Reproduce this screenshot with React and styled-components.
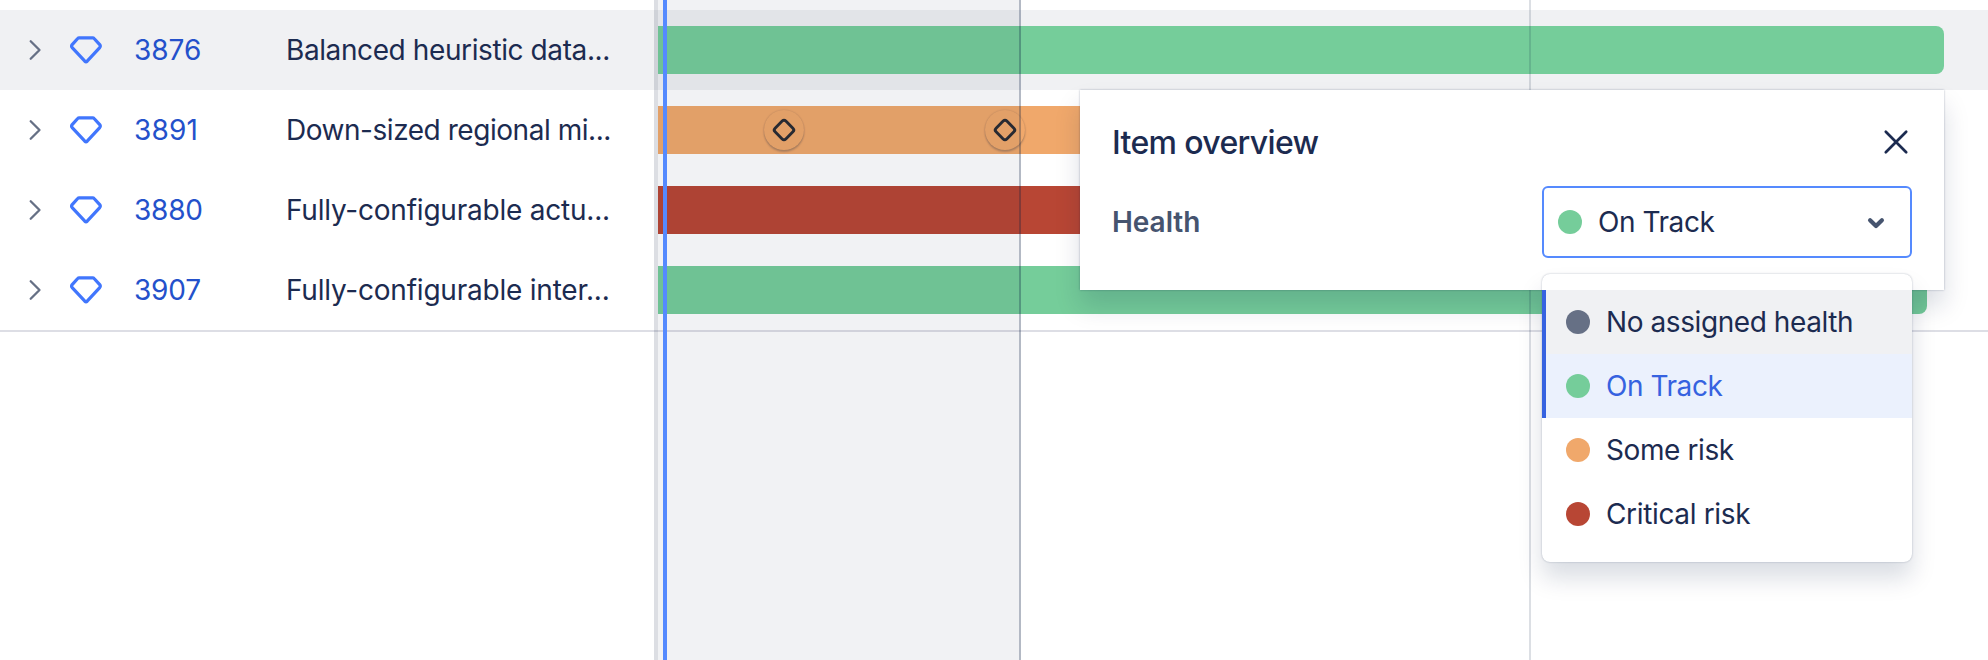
import React, { useState } from "react";
import styled, { createGlobalStyle } from "styled-components";

const GlobalStyle = createGlobalStyle`
  * {
    box-sizing: border-box;
  }
  body {
    margin: 0;
    background: #ffffff;
    color: #1c2b50;
    font-family: Inter, "Liberation Sans", sans-serif;
    font-size: 28px;
    line-height: 40px;
    -webkit-font-smoothing: antialiased;
  }
`;

const HEALTH = {
  none: { label: "No assigned health", color: "#667085", spacing: -0.42 },
  onTrack: { label: "On Track", color: "#75cd9a", spacing: -0.45 },
  someRisk: { label: "Some risk", color: "#f0a86b", spacing: -0.4 },
  criticalRisk: { label: "Critical risk", color: "#b84634", spacing: -0.35 },
};

const items = [
  { id: "3876", title: "Balanced heuristic data...", health: "onTrack", width: 1286, spacing: -0.4, idSpacing: 0 },
  { id: "3891", title: "Down-sized regional mi...", health: "someRisk", width: 1200, milestones: [106, 327], spacing: -0.46, idSpacing: 0.2 },
  { id: "3880", title: "Fully-configurable actu...", health: "criticalRisk", width: 1200, spacing: -0.22, idSpacing: -0.2 },
  { id: "3907", title: "Fully-configurable inter...", health: "onTrack", width: 1269, spacing: -0.22, idSpacing: -0.2 },
];

const Board = styled.main`
  position: relative;
  width: 1988px;
  height: 660px;
  padding-top: 10px;
  overflow: hidden;
`;
const Rows = styled.div`
  border-bottom: 2px solid #dddee5;
`;
const Row = styled.div`
  display: grid;
  grid-template-columns: 658px 1fr;
  height: 80px;
  background: ${({ $active }) => ($active ? "#f0f1f3" : "transparent")};
`;
const Cells = styled.div`
  display: grid;
  grid-template-columns: 70px 64px 152px 340px;
  align-items: center;
`;
const Expander = styled.button`
  display: flex;
  align-items: center;
  justify-content: center;
  height: 40px;
  padding: 0;
  border: 0;
  background: none;
`;
const ItemId = styled.a`
  color: #2451cb;
  letter-spacing: ${({ $spacing }) => $spacing}px;
`;
const Title = styled.span`
  white-space: nowrap;
  letter-spacing: ${({ $spacing }) => $spacing}px;
`;
const Lane = styled.div`
  display: flex;
  align-items: center;
`;
const Bar = styled.div`
  position: relative;
  height: 48px;
  border-radius: 0 8px 8px 0;
`;
const Milestone = styled.span`
  position: absolute;
  top: 4px;
  display: flex;
  align-items: center;
  justify-content: center;
  width: 40px;
  height: 40px;
  border-radius: 50%;
  box-shadow: 0 2px 2px rgba(9, 30, 66, 0.22), 0 0 2px rgba(9, 30, 66, 0.2);
`;

/* Timeline layers, drawn over the rows */
const Layer = styled.div`
  position: absolute;
  top: 0;
  bottom: 0;
  left: ${({ $left }) => $left}px;
  width: ${({ $width }) => $width}px;
  background: ${({ $color }) => $color};
  pointer-events: none;
`;

const Panel = styled.section`
  position: absolute;
  top: 90px;
  left: 1080px;
  width: 864px;
  height: 200px;
  padding: 32px;
  background: #ffffff;
  box-shadow: 0 16px 24px rgba(9, 30, 66, 0.15), 0 0 2px rgba(9, 30, 66, 0.31);
`;
const PanelHeader = styled.header`
  display: flex;
  align-items: center;
  justify-content: space-between;
  height: 40px;
`;
const PanelTitle = styled.h2`
  margin: 2px 0 0;
  font-size: 32px;
  font-weight: 500;
  letter-spacing: -0.65px;
`;
const CloseButton = styled.button`
  display: flex;
  padding: 0;
  border: 0;
  background: none;
`;
const Field = styled.div`
  display: flex;
  align-items: center;
  justify-content: space-between;
  margin-top: 24px;
`;
const FieldLabel = styled.span`
  color: #46546f;
  font-weight: 600;
  letter-spacing: -0.05px;
`;
const SelectWrap = styled.div`
  position: relative;
  width: 370px;
`;
const Select = styled.button`
  display: flex;
  align-items: center;
  width: 100%;
  height: 72px;
  padding: 0 18px 0 14px;
  border: 2px solid #558afe;
  border-radius: 6px;
  background: #ffffff;
  color: inherit;
  font: inherit;
  text-align: left;
`;
const Dot = styled.span`
  flex: none;
  width: 24px;
  height: 24px;
  margin-right: 16px;
  border-radius: 50%;
  background: ${({ $color }) => $color};
`;
const Label = styled.span`
  flex: 1;
  white-space: nowrap;
  letter-spacing: ${({ $spacing }) => $spacing}px;
`;
const Menu = styled.ul`
  position: absolute;
  top: 88px;
  left: 0;
  width: 370px;
  margin: 0;
  padding: 16px 0;
  list-style: none;
  border-radius: 8px;
  background: #ffffff;
  box-shadow: 0 16px 24px rgba(9, 30, 66, 0.15), 0 0 2px rgba(9, 30, 66, 0.31);
`;
const Option = styled.li`
  display: flex;
  align-items: center;
  height: 64px;
  padding-left: 20px;
  border-left: 4px solid ${({ $marked }) => ($marked ? "#3662e0" : "transparent")};
  background: ${({ $selected, $hovered }) =>
    $selected ? "#ebf1fd" : $hovered ? "#f0f1f3" : "transparent"};
  color: ${({ $selected }) => ($selected ? "#3662e0" : "inherit")};
`;

const ChevronRight = () => (
  <svg width="20" height="24" viewBox="0 0 20 24" fill="none">
    <path d="M5.7 3.2l8.8 8.8-8.8 8.8" stroke="#667085" strokeWidth="2.3" strokeLinecap="round" strokeLinejoin="round" />
  </svg>
);
const GemIcon = () => (
  <svg width="32" height="32" viewBox="0 0 32 32" fill="none">
    <path
      d="M9.1 3.8h13.6q.8 0 1.4.7l5.6 6.1q1.2 1.5 0 3L17.2 27.2q-1.2 1.1-2.4 0L2.2 13.6q-1.2-1.5 0-3l5.5-6.1q.6-.7 1.4-.7z"
      stroke="#4176fd"
      strokeWidth="3.2"
    />
  </svg>
);
const DiamondIcon = () => (
  <svg width="28" height="28" viewBox="0 0 28 28" fill="none">
    <rect x="6.4" y="6.4" width="15.2" height="15.2" rx="2.6" transform="rotate(45 14 14)" stroke="#292b31" strokeWidth="2.9" />
  </svg>
);
const CloseIcon = () => (
  <svg width="32" height="32" viewBox="0 0 32 32" fill="none">
    <path d="M5.8 5.8l20.4 20.4M26.2 5.8L5.8 26.2" stroke="#1c2b50" strokeWidth="2.7" strokeLinecap="round" />
  </svg>
);
const ChevronDown = () => (
  <svg width="32" height="32" viewBox="0 0 32 32" fill="none">
    <path d="M10.1 14.2l5.9 5.8 5.9-5.8" stroke="#46546f" strokeWidth="4.2" strokeLinecap="round" strokeLinejoin="round" />
  </svg>
);

function App() {
  const [health, setHealth] = useState("onTrack");
  const [open, setOpen] = useState(true);
  const selected = HEALTH[health];
  return (
    <>
      <GlobalStyle />
      <Board>
        <Rows>
          {items.map((item, index) => (
            <Row key={item.id} $active={index === 0}>
              <Cells>
                <Expander aria-label="Expand">
                  <ChevronRight />
                </Expander>
                <GemIcon />
                <ItemId $spacing={item.idSpacing}>{item.id}</ItemId>
                <Title $spacing={item.spacing}>{item.title}</Title>
              </Cells>
              <Lane>
                <Bar style={{ width: item.width, background: HEALTH[item.health].color }}>
                  {(item.milestones || []).map((left) => (
                    <Milestone key={left} style={{ left }}>
                      <DiamondIcon />
                    </Milestone>
                  ))}
                </Bar>
              </Lane>
            </Row>
          ))}
        </Rows>
        <Layer $left={654} $width={4} $color="rgba(9, 20, 60, 0.14)" />
        <Layer $left={658} $width={361} $color="rgba(9, 30, 66, 0.06)" />
        <Layer $left={663} $width={4} $color="#558afe" />
        <Layer $left={1019} $width={2} $color="rgba(9, 30, 66, 0.31)" />
        <Layer $left={1529} $width={2} $color="rgba(9, 30, 66, 0.14)" />

        <Panel>
          <PanelHeader>
            <PanelTitle>Item overview</PanelTitle>
            <CloseButton aria-label="Close">
              <CloseIcon />
            </CloseButton>
          </PanelHeader>
          <Field>
            <FieldLabel>Health</FieldLabel>
            <SelectWrap>
              <Select onClick={() => setOpen(!open)}>
                <Dot $color={selected.color} />
                <Label $spacing={selected.spacing}>{selected.label}</Label>
                <ChevronDown />
              </Select>
              {open && (
                <Menu>
                  {Object.entries(HEALTH).map(([key, option]) => (
                    <Option
                      key={key}
                      $selected={key === health}
                      $hovered={key === "none"}
                      $marked={key === health || key === "none"}
                      onClick={() => setHealth(key)}
                    >
                      <Dot $color={option.color} />
                      <Label $spacing={option.spacing}>{option.label}</Label>
                    </Option>
                  ))}
                </Menu>
              )}
            </SelectWrap>
          </Field>
        </Panel>
      </Board>
    </>
  );
}

export default App;
